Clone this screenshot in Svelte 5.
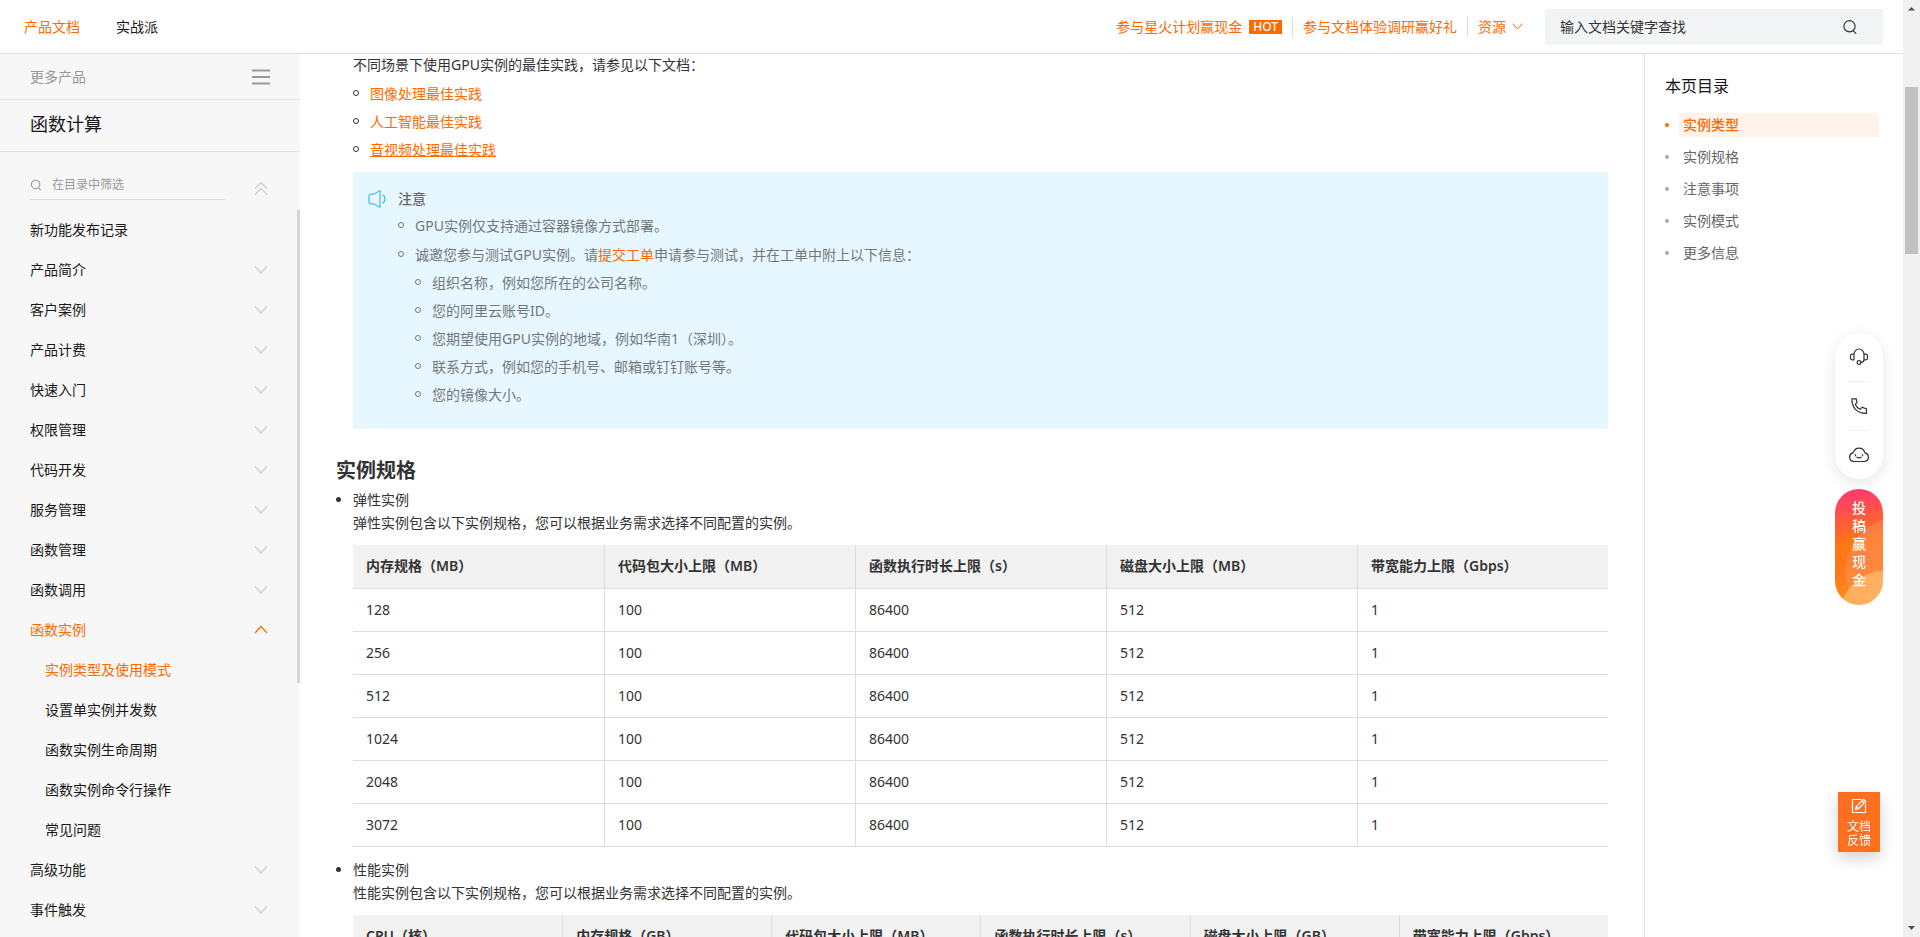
<script lang="ts">
  type NavItem = {
    label: string;
    leaf?: boolean;
    children?: string[];
  };

  const NAV: NavItem[] = [
    { label: "新功能发布记录", leaf: true },
    { label: "产品简介" },
    { label: "客户案例" },
    { label: "产品计费" },
    { label: "快速入门" },
    { label: "权限管理" },
    { label: "代码开发" },
    { label: "服务管理" },
    { label: "函数管理" },
    { label: "函数调用" },
    {
      label: "函数实例",
      children: [
        "实例类型及使用模式",
        "设置单实例并发数",
        "函数实例生命周期",
        "函数实例命令行操作",
        "常见问题",
      ],
    },
    { label: "高级功能" },
    { label: "事件触发" },
  ];

  const TOC = ["实例类型", "实例规格", "注意事项", "实例模式", "更多信息"];

  const TICKET_INFO = [
    "组织名称，例如您所在的公司名称。",
    "您的阿里云账号ID。",
    "您期望使用GPU实例的地域，例如华南1（深圳）。",
    "联系方式，例如您的手机号、邮箱或钉钉账号等。",
    "您的镜像大小。",
  ];

  const ELASTIC_HEAD = [
    "内存规格（MB）",
    "代码包大小上限（MB）",
    "函数执行时长上限（s）",
    "磁盘大小上限（MB）",
    "带宽能力上限（Gbps）",
  ];
  const ELASTIC_ROWS = [128, 256, 512, 1024, 2048, 3072].map((mem) => [
    mem,
    100,
    86400,
    512,
    1,
  ]);

  const PERF_HEAD = [
    "CPU（核）",
    "内存规格（GB）",
    "代码包大小上限（MB）",
    "函数执行时长上限（s）",
    "磁盘大小上限（GB）",
    "带宽能力上限（Gbps）",
  ];

  let openGroup = $state("函数实例");
  let currentPage = $state("实例类型及使用模式");
  let currentSection = $state("实例类型");
  let filter = $state("");
  let keyword = $state("");

  const visibleNav = $derived(
    NAV.filter(
      (item) =>
        item.label.includes(filter) ||
        item.children?.some((child) => child.includes(filter)),
    ),
  );

  function toggle(label: string) {
    openGroup = openGroup === label ? "" : label;
  }
</script>

{#snippet chevron(up: boolean)}
  <svg class="chevron" viewBox="0 0 16 16" aria-hidden="true">
    <path d={up ? "M2 11 8 4.500l6 6.500" : "M2 4.500l6 6.500 6-6.500"} />
  </svg>
{/snippet}

{#snippet magnifier()}
  <svg class="magnifier" viewBox="0 0 16 16" aria-hidden="true">
    <circle cx="7.5" cy="7.3" r="5.6" />
    <path d="m11.2 11.6 3 3.2" />
  </svg>
{/snippet}

{#snippet specTable(head: string[], rows: number[][])}
  <table>
    <thead>
      <tr>
        {#each head as title}
          <th scope="col">{title}</th>
        {/each}
      </tr>
    </thead>
    <tbody>
      {#each rows as row}
        <tr>
          {#each row as cell}
            <td>{cell}</td>
          {/each}
        </tr>
      {/each}
    </tbody>
  </table>
{/snippet}

<div class="window">
  <div class="page">
    <header>
      <nav class="tabs" aria-label="文档">
        <a class="active" href="#docs">产品文档</a>
        <a href="#practice">实战派</a>
      </nav>
      <div class="promos">
        <a href="#spark">参与星火计划赢现金<span class="hot">HOT</span></a>
        <a href="#survey">参与文档体验调研赢好礼</a>
        <button type="button">资源{@render chevron(false)}</button>
      </div>
      <form class="search" onsubmit={(e) => e.preventDefault()}>
        <input
          type="text"
          aria-label="输入文档关键字查找"
          placeholder="输入文档关键字查找"
          bind:value={keyword}
        />
        <button type="submit" aria-label="查找">{@render magnifier()}</button>
      </form>
    </header>

    <div class="columns">
      <aside class="sidebar">
        <button type="button" class="more">
          更多产品
          <svg viewBox="0 0 18 16" aria-hidden="true">
            <path d="M0 1.500h18M0 8h18M0 14.500h18" />
          </svg>
        </button>
        <h2 class="product">函数计算</h2>
        <div class="filter">
          <label>
            {@render magnifier()}
            <input
              type="text"
              aria-label="在目录中筛选"
              placeholder="在目录中筛选"
              bind:value={filter}
            />
          </label>
          <button type="button" aria-label="收起" onclick={() => (openGroup = "")}>
            <svg viewBox="0 0 16 16" aria-hidden="true">
              <path d="M2 8.5 8 2.5l6 6M2 14.5l6-6 6 6" />
            </svg>
          </button>
        </div>
        <div class="tree">
          <ul>
            {#each visibleNav as item (item.label)}
              {@const open = openGroup === item.label}
              <li>
                {#if item.leaf}
                  <a href="#{item.label}">{item.label}</a>
                {:else}
                  <button
                    type="button"
                    class:open
                    aria-expanded={open}
                    onclick={() => toggle(item.label)}
                  >
                    {item.label}
                    {@render chevron(open)}
                  </button>
                {/if}
                {#if open && item.children}
                  <ul class="children">
                    {#each item.children as child}
                      <li>
                        <a
                          href="#{child}"
                          class:current={child === currentPage}
                          onclick={() => (currentPage = child)}>{child}</a
                        >
                      </li>
                    {/each}
                  </ul>
                {/if}
              </li>
            {/each}
          </ul>
          <div class="tree-thumb"></div>
        </div>
      </aside>

      <main>
        <div class="indent">
          <p>不同场景下使用GPU实例的最佳实践，请参见以下文档：</p>
          <ul class="rings links">
            <li><a href="#image">图像处理最佳实践</a></li>
            <li><a href="#ai">人工智能最佳实践</a></li>
            <li><a class="hovered" href="#media">音视频处理最佳实践</a></li>
          </ul>
          <section class="notice">
            <svg viewBox="0 0 18 18" aria-hidden="true">
              <path d="M3 4.2h2.500L12 .8v16.400l-6.500-3.400H3q-2 0-2-2V6.200q0-2 2-2z" />
              <path d="M14.500 4.800q2.500 1.200 2.500 4.200t-2.500 4.200" />
            </svg>
            <div>
              <h3>注意</h3>
              <ul class="rings outer">
                <li>GPU实例仅支持通过容器镜像方式部署。</li>
                <li>
                  诚邀您参与测试GPU实例。请<a href="#ticket">提交工单</a>申请参与测试，并在工单中附上以下信息：
                  <ul class="rings inner">
                    {#each TICKET_INFO as info}
                      <li>{info}</li>
                    {/each}
                  </ul>
                </li>
              </ul>
            </div>
          </section>
        </div>

        <h2 id="spec">实例规格</h2>
        <ul class="specs">
          <li>
            <p>弹性实例</p>
            <p>弹性实例包含以下实例规格，您可以根据业务需求选择不同配置的实例。</p>
            {@render specTable(ELASTIC_HEAD, ELASTIC_ROWS)}
          </li>
          <li>
            <p>性能实例</p>
            <p>性能实例包含以下实例规格，您可以根据业务需求选择不同配置的实例。</p>
            {@render specTable(PERF_HEAD, [])}
          </li>
        </ul>
      </main>

      <aside class="toc">
        <h3>本页目录</h3>
        <ul>
          {#each TOC as section}
            <li class:current={section === currentSection}>
              <a href="#{section}" onclick={() => (currentSection = section)}>{section}</a>
            </li>
          {/each}
        </ul>
      </aside>
    </div>
  </div>

  <div class="scrollbar" aria-hidden="true">
    <svg viewBox="0 0 17 17"><path d="M5 10.500h7L8.500 7z" /></svg>
    <div class="track"><div class="thumb"></div></div>
    <svg viewBox="0 0 17 17"><path d="M5 6h7l-3.500 4z" /></svg>
  </div>
</div>

<div class="contact">
  <button type="button" aria-label="在线咨询">
    <svg viewBox="0 0 20 20">
      <path d="M5 13V7.500a5 5.500 0 0 1 10 0v5q0 2.500-3.100 3" />
      <path d="M5 7.200H3.200q-1.700 0-1.700 1.500v2.600q0 1.500 1.700 1.500H5M15 7.200h1.800q1.700 0 1.700 1.500v2.600q0 1.500-1.700 1.500H15" />
      <circle cx="10" cy="15.500" r="1.900" />
    </svg>
  </button>
  <button type="button" aria-label="电话">
    <svg viewBox="0 0 20 20">
      <path d="M3 2.800h4.200l.8 3.800-1.800 1.700q1.500 3.400 4.800 5l2.200-2.200 4.300 1.800v4.500Q10 17.500 6 12.800 2.600 8.500 3 2.800z" />
    </svg>
  </button>
  <button type="button" aria-label="智能助手">
    <svg viewBox="0 0 20 20">
      <path d="M5 16.500q-4.500-.3-4.400-4.600.2-3.300 3.400-4Q5.800 3.300 10 3.200t6 4.700q3.200.7 3.400 4 .1 4.300-4.400 4.600z" />
      <path d="M6.500 9.200v2M13.500 9.200v2M7.500 12q2.500 1.800 5 0" />
    </svg>
  </button>
</div>

<a class="reward" href="#contribute"><span>投稿赢现金</span></a>

<button type="button" class="feedback">
  <svg viewBox="0 0 16 16" aria-hidden="true">
    <path d="M10.500 1.500h-9v13h13V6" />
    <path d="m4.500 11.500.8-3 7.200-7.200 2.200 2.200-7.200 7.200zM5.300 8.500l2.200 2.200M11 2.800 13.200 5" />
  </svg>
  <span>文档<br />反馈</span>
</button>

<style>
  :global(body) {
    margin: 0;
    font-family: "Noto Sans", "Noto Sans CJK SC", sans-serif;
    font-size: 14px;
    line-height: 22px;
    color: #333;
    background: #fff;
  }
  ul,
  p,
  h2,
  h3 {
    margin: 0;
    padding: 0;
    list-style: none;
  }
  a {
    color: #ff6a00;
    text-decoration: none;
  }
  button,
  input {
    border: 0;
    padding: 0;
    background: none;
    font: inherit;
    color: inherit;
  }
  button {
    cursor: pointer;
  }
  input {
    min-width: 0;
    flex: 1;
    outline: none;
  }
  svg {
    flex: none;
    fill: none;
    stroke: currentColor;
    stroke-width: 1.2;
  }
  .chevron {
    width: 16px;
    height: 16px;
  }

  .window {
    display: flex;
    height: 100vh;
    overflow: hidden;
  }
  .page {
    display: flex;
    flex: 1;
    flex-direction: column;
    min-width: 0;
  }

  header {
    display: flex;
    align-items: center;
    box-sizing: border-box;
    height: 54px;
    padding: 0 20px 0 24px;
    border-bottom: 1px solid #e0e0e0;
  }
  .tabs {
    display: flex;
    flex: 1;
    gap: 36px;
  }
  .tabs a {
    color: #181818;
  }
  .tabs a.active {
    color: #ff6a00;
  }
  .promos {
    display: flex;
    align-items: center;
    margin-right: 21px;
    color: #ff6a00;
  }
  .promos a {
    display: flex;
    align-items: center;
    gap: 7px;
    padding-right: 10px;
    margin-right: 10px;
    height: 20px;
    border-right: 1px solid #ddd;
  }
  .promos button {
    display: flex;
    align-items: center;
    gap: 5px;
  }
  .promos .chevron {
    width: 13px;
    height: 13px;
  }
  .hot {
    padding: 0 4px;
    background: #ff6a00;
    color: #fff;
    font-size: 12px;
    font-weight: 500;
    line-height: 14px;
  }
  .search {
    display: flex;
    align-items: center;
    box-sizing: border-box;
    width: 338px;
    height: 36px;
    padding: 0 25px 0 15px;
    background: #f3f4f6;
  }
  .search button {
    display: flex;
  }
  .search input::placeholder {
    color: #333;
    opacity: 1;
  }
  .magnifier {
    width: 16px;
    height: 16px;
  }

  .columns {
    display: flex;
    flex: 1;
    min-height: 0;
  }
  .sidebar {
    display: flex;
    flex: none;
    flex-direction: column;
    width: 300px;
    background: #f7f7f7;
    color: #181818;
  }
  .more {
    display: flex;
    flex: none;
    align-items: center;
    justify-content: space-between;
    height: 46px;
    padding: 0 30px;
    border-bottom: 1px solid #e0e0e0;
    color: #999;
  }
  .more svg {
    width: 18px;
    height: 16px;
    stroke-width: 2;
  }
  .product {
    padding: 11px 30px 13px;
    border-bottom: 1px solid #e0e0e0;
    font-size: 18px;
    font-weight: 400;
    line-height: 27px;
  }
  .filter {
    display: flex;
    align-items: center;
    justify-content: space-between;
    padding: 18px 31px 10px 30px;
    color: #999;
  }
  .filter label {
    display: flex;
    align-items: center;
    gap: 10px;
    width: 195px;
    height: 29px;
    border-bottom: 1px solid #ddd;
    font-size: 12px;
  }
  .filter .magnifier {
    width: 12px;
    height: 12px;
    stroke-width: 1.500;
  }
  .filter input::placeholder {
    color: #999;
    opacity: 1;
  }
  .filter button {
    display: flex;
    padding-top: 6px;
    color: #ccc;
  }
  .filter button svg {
    width: 16px;
    height: 16px;
  }
  .tree {
    display: flex;
    flex: 1;
    min-height: 0;
    overflow: hidden;
  }
  .tree > ul {
    flex: 1;
  }
  .tree a,
  .tree button {
    display: flex;
    align-items: center;
    justify-content: space-between;
    box-sizing: border-box;
    width: 100%;
    height: 40px;
    padding: 0 28px 0 30px;
    color: #181818;
  }
  .tree .chevron {
    color: #ccc;
  }
  .tree .children a {
    padding-left: 45px;
  }
  .tree .open,
  .tree .open .chevron,
  .tree a.current {
    color: #ff6a00;
  }
  .tree-thumb {
    width: 3px;
    height: 65%;
    background: #d4d4d4;
  }

  main {
    flex: 1;
    min-width: 0;
    padding: 0 36px;
    overflow: hidden;
  }
  .indent {
    padding-left: 17px;
  }
  .rings {
    display: flex;
    flex-direction: column;
    gap: 6px;
  }
  .rings > li {
    position: relative;
    padding-left: 17px;
  }
  .rings > li::before {
    content: "";
    position: absolute;
    top: 7px;
    left: 0;
    box-sizing: border-box;
    width: 6px;
    height: 6px;
    border: 1px solid currentColor;
    border-radius: 50%;
  }
  .links {
    padding: 7px 0 11px;
  }
  .hovered,
  main a:hover {
    text-decoration: underline;
  }
  .notice {
    display: flex;
    gap: 12px;
    padding: 16px 15px 23px;
    background: #e6f7ff;
    color: #73777a;
  }
  .notice svg {
    width: 18px;
    height: 18px;
    margin-top: 2px;
    color: #3dbdf0;
  }
  .notice h3 {
    font-size: 14px;
    font-weight: 500;
    color: #666;
  }
  .outer {
    gap: 7px;
    padding-top: 5px;
  }
  .inner {
    padding-top: 6px;
  }

  main > h2 {
    margin: 28px 0 3px;
    font-size: 20px;
    font-weight: 700;
    line-height: 28px;
  }
  .specs > li {
    position: relative;
    padding-left: 17px;
    line-height: 23px;
  }
  .specs > li::before {
    content: "";
    position: absolute;
    top: 9px;
    left: 0;
    width: 5px;
    height: 5px;
    border-radius: 50%;
    background: #333;
  }
  table {
    width: 100%;
    margin: 11px 0;
    border-collapse: separate;
    border-spacing: 0;
    table-layout: fixed;
  }
  th,
  td {
    padding: 9px 13px 10px;
    border-bottom: 1px solid #ddd;
    text-align: left;
  }
  th {
    padding-bottom: 11px;
    background: #f2f2f2;
    font-weight: 600;
  }
  th + th,
  td + td {
    border-left: 1px solid #ddd;
  }

  .toc {
    flex: none;
    box-sizing: border-box;
    width: 259px;
    padding: 20px 24px 0 20px;
    border-left: 1px solid #e0e0e0;
  }
  .toc h3 {
    margin-bottom: 15px;
    font-size: 16px;
    font-weight: 400;
    line-height: 24px;
    color: #181818;
  }
  .toc ul {
    display: flex;
    flex-direction: column;
    gap: 8px;
  }
  .toc li {
    display: flex;
    align-items: center;
    gap: 10px;
    color: #aaa;
  }
  .toc li::before {
    content: "";
    width: 4px;
    height: 4px;
    border-radius: 50%;
    background: currentColor;
  }
  .toc a {
    flex: 1;
    padding-left: 4px;
    line-height: 24px;
    color: #666;
  }
  .toc .current,
  .toc .current a {
    color: #ff6a00;
  }
  .toc .current a {
    background: #fff3eb;
    font-weight: 500;
  }

  .scrollbar {
    display: flex;
    flex: none;
    flex-direction: column;
    width: 17px;
    background: #f0f0f0;
  }
  .scrollbar svg {
    height: 17px;
    fill: #505050;
    stroke: none;
  }
  .track {
    display: flex;
    flex: 1;
    flex-direction: column;
    align-items: center;
    padding-top: 70px;
  }
  .thumb {
    width: 13px;
    height: 20%;
    background: #c1c1c1;
  }

  .contact {
    position: fixed;
    top: 333px;
    right: 37px;
    box-sizing: border-box;
    width: 48px;
    padding: 0 14px;
    border-radius: 24px;
    background: #fff;
    box-shadow: 0 4px 16px rgba(0, 0, 0, 0.1);
    color: #333;
  }
  .contact button {
    display: flex;
    align-items: center;
    box-sizing: content-box;
    height: 48px;
  }
  .contact button + button {
    border-top: 1px solid #eee;
  }
  .contact svg {
    width: 20px;
    height: 20px;
  }
  .reward {
    position: fixed;
    top: 489px;
    right: 37px;
    display: flex;
    justify-content: center;
    box-sizing: border-box;
    width: 48px;
    padding: 10px 0 16px;
    border-radius: 24px;
    background:
      radial-gradient(circle at 52px 130px, rgba(255, 190, 110, 0.7) 48px, transparent 49px),
      radial-gradient(circle at 64px 82px, rgba(255, 150, 100, 0.6), rgba(255, 150, 100, 0.4) 53px, transparent 54px),
      linear-gradient(170deg, #ff4064 8%, #ff7a10 48%, #ff7418 60%, #ff9020);
    color: #fff;
    font-weight: 500;
    line-height: 18px;
  }
  .reward span {
    width: 14px;
    word-break: break-all;
  }
  .feedback {
    position: fixed;
    right: 40px;
    bottom: 85px;
    display: flex;
    flex-direction: column;
    align-items: center;
    gap: 6px;
    width: 42px;
    height: 60px;
    padding-top: 6px;
    background: #ff6f20;
    box-shadow: 0 6px 16px rgba(0, 0, 0, 0.18);
    color: #fff;
    font-size: 12px;
    line-height: 14px;
  }
  .feedback svg {
    width: 16px;
    height: 16px;
  }
</style>
